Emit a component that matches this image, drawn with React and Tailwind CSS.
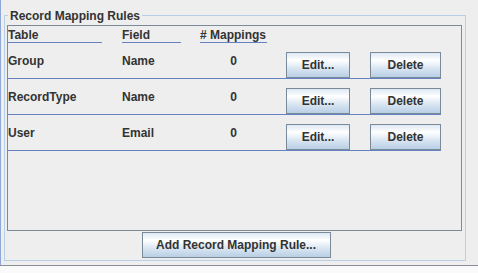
import React from "react";

function JButton({ children, className = "" }) {
  return (
    <div
      className={
        "h-[26px] border border-[#7a8a99] bg-[linear-gradient(to_bottom,#dde8f3_0%,#ffffff_30%,#dde8f3_60%,#b8cfe5_100%)] flex items-center justify-center leading-[14px] text-[#333333] " +
        className
      }
    >
      {children}
    </div>
  );
}

const rows = [
  { table: "Group", field: "Name", count: "0" },
  { table: "RecordType", field: "Name", count: "0" },
  { table: "User", field: "Email", count: "0" },
];

export default function App() {
  return (
    <div className="w-[478px] h-[273px] bg-[#eeeeee] flex flex-col font-['Liberation_Sans',Arial,sans-serif] text-[12px] font-bold text-[#333333] overflow-hidden">
      <div className="pt-[15px] pl-[3px] border-l border-[#8fa8d6]">
        <div className="relative w-[462px] h-[246px] border border-[#b8cfe5] pl-[2px] pt-[9px] flex flex-col">
          <span className="absolute left-[3px] top-[-7px] px-[2px] bg-[#eeeeee] leading-[14px] whitespace-nowrap">
            Record Mapping Rules
          </span>
          <div className="w-[455px] h-[206px] border border-[#7a8a99] flex flex-col">
            <div className="flex pt-[2px] leading-[14px]">
              <div className="w-[94px] mr-[20px] border-b border-[#6382bf]">Table</div>
              <div className="w-[59px] mr-[19px] border-b border-[#6382bf]">Field</div>
              <div className="w-[67px] border-b border-[#6382bf] whitespace-nowrap"># Mappings</div>
            </div>
            {rows.map((r) => (
              <div
                key={r.table}
                className="w-[433px] h-[36px] flex border-b border-[#6382bf] leading-[14px]"
              >
                <div className="w-[114px] self-center pt-[1px]">{r.table}</div>
                <div className="w-[78px] self-center pt-[1px]">{r.field}</div>
                <div className="w-[67px] self-center text-center pt-[1px]">{r.count}</div>
                <div className="w-[19px]" />
                <JButton className="w-[64px] self-end">Edit...</JButton>
                <div className="w-[20px]" />
                <JButton className="w-[71px] self-end">Delete</JButton>
              </div>
            ))}
          </div>
          <div className="flex justify-center mt-[1px]">
            <JButton className="w-[189px]">Add Record Mapping Rule...</JButton>
          </div>
        </div>
        <div className="h-[4px]" />
      </div>
      <div className="flex-1 border-t border-[#8a8f96] bg-[#fafafa]" />
    </div>
  );
}
